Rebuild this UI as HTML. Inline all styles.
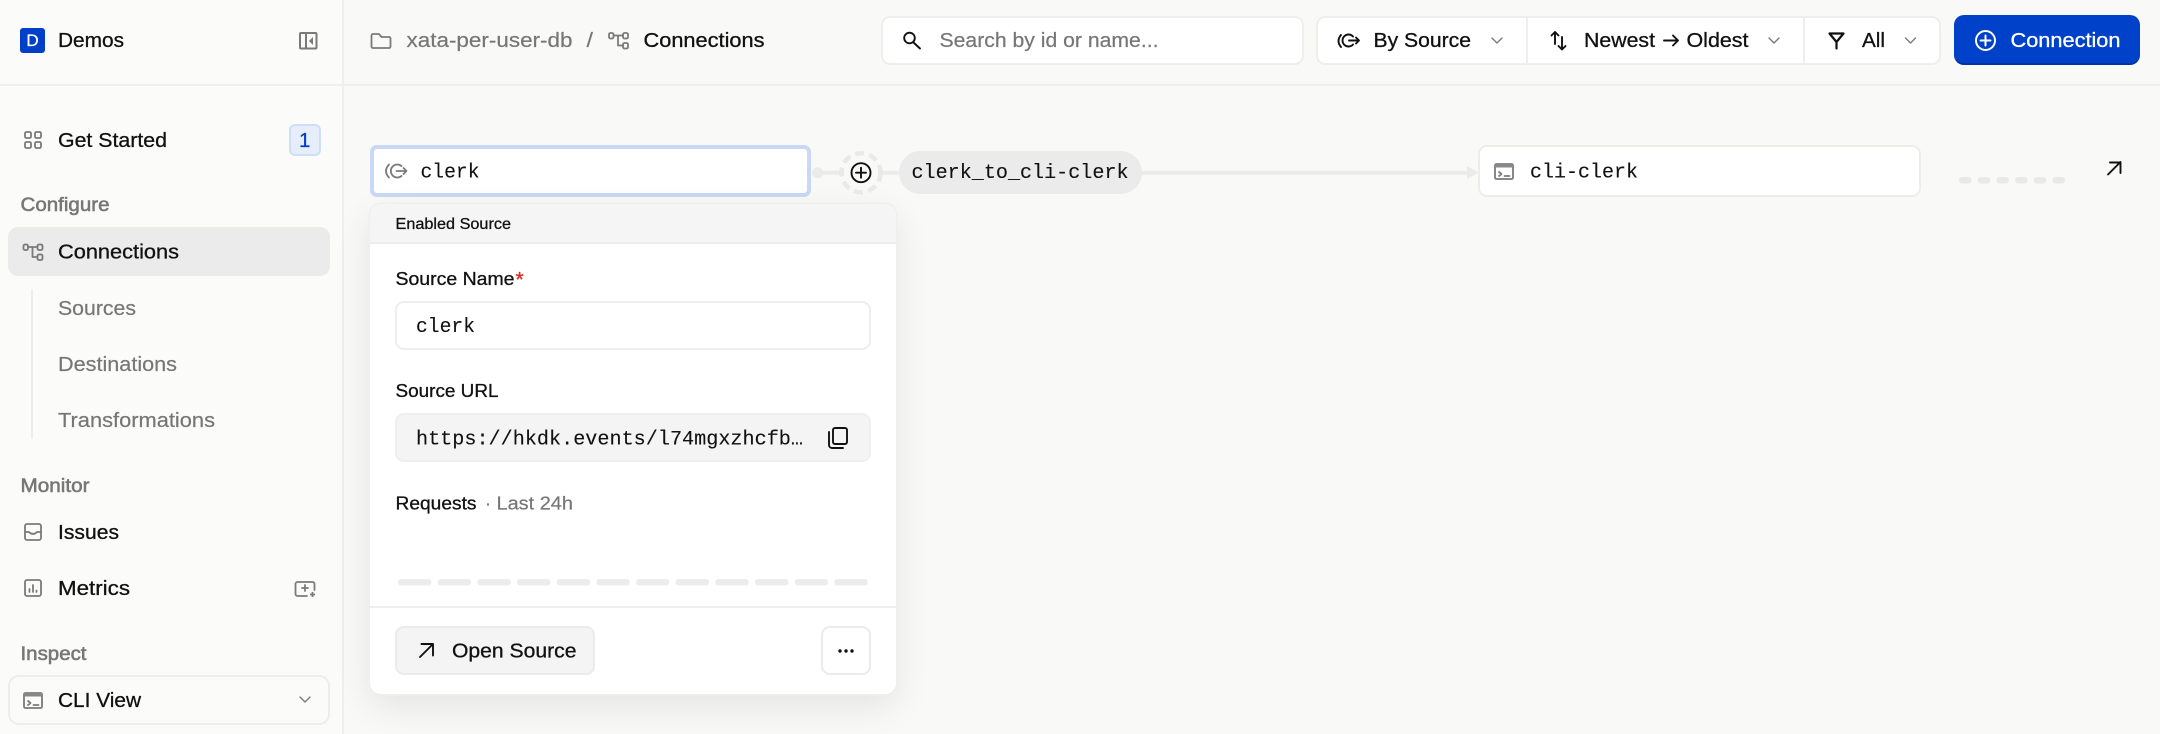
<!DOCTYPE html>
<html lang="en">
<head>
<meta charset="utf-8">
<title>Connections</title>
<style>
html,body{margin:0;padding:0;width:2160px;height:734px;overflow:hidden;background:#f9f9f7}
body{position:relative;font-family:"Liberation Sans",sans-serif}
.b{position:absolute;box-sizing:border-box}
svg.o{position:absolute;left:0;top:0;width:2160px;height:734px}
svg text{font-family:"Liberation Sans",sans-serif;font-size:20.5px;fill:#111;stroke:#111;stroke-width:.3}
svg text.m{font-family:"Liberation Mono",monospace;font-size:20.5px;stroke-width:.12}
svg text.g{fill:#767676;stroke:#767676;stroke-width:.2}
svg text.h{font-size:19px;fill:#777;stroke:#777;stroke-width:.55}
svg text.s{font-size:18.5px;stroke-width:.3}
.i{fill:none;stroke:#7a7a7a;stroke-width:1.8;stroke-linecap:round;stroke-linejoin:round}
.c{fill:none;stroke:#7a7a7a;stroke-width:1.4;stroke-linecap:round;stroke-linejoin:round}
.k{fill:none;stroke:#111;stroke-width:1.9;stroke-linecap:round;stroke-linejoin:round}
</style>
</head>
<body>
<!-- sidebar -->
<div class="b" style="left:0;top:0;width:344px;height:734px;background:#fbfbf9;border-right:2px solid #efefed"></div>
<div class="b" style="left:344px;top:0;width:1816px;height:85px;background:#f9f9f8"></div>
<div class="b" style="left:0;top:84px;width:2160px;height:2px;background:#efefed"></div>
<div class="b" style="left:20px;top:28px;width:25px;height:25px;background:#0040c8;border-radius:3px"></div>
<div class="b" style="left:289px;top:124px;width:32px;height:32px;background:#e6eefb;border:2px solid #cfdef8;border-radius:6px"></div>
<div class="b" style="left:8px;top:227px;width:322px;height:49px;background:#ebebeb;border-radius:10px"></div>
<div class="b" style="left:31px;top:289px;width:2px;height:150px;background:#ededeb"></div>
<div class="b" style="left:8px;top:675px;width:322px;height:50px;background:#fbfbf9;border:2px solid #ededeb;border-radius:11px"></div>

<!-- toolbar -->
<div class="b" style="left:881px;top:16px;width:423px;height:49px;background:#fff;border:2px solid #eeeeec;border-radius:9px"></div>
<div class="b" style="left:1316px;top:16px;width:625px;height:49px;background:#fff;border:2px solid #eeeeec;border-radius:9px"></div>
<div class="b" style="left:1526px;top:17px;width:2px;height:47px;background:#eeeeec"></div>
<div class="b" style="left:1803px;top:17px;width:2px;height:47px;background:#eeeeec"></div>
<div class="b" style="left:1954px;top:15px;width:186px;height:50px;background:#0041c9;border-bottom:2px solid #00349f;border-radius:10px"></div>

<!-- nodes -->
<div class="b" style="left:370px;top:145px;width:441px;height:52px;background:#fff;border:4px solid #c9d8f5;border-radius:7px"></div>
<div class="b" style="left:899px;top:151px;width:243px;height:43px;background:#ebebeb;border-radius:22px"></div>
<div class="b" style="left:1478px;top:145px;width:443px;height:52px;background:#fff;border:2px solid #ededeb;border-radius:9px"></div>

<!-- popover -->
<div class="b" style="left:370px;top:204px;width:526px;height:490px;background:#fff;border-radius:11px;box-shadow:0 0 0 1.5px #efefed,0 12px 36px rgba(0,0,0,.09);overflow:hidden">
  <div class="b" style="left:0;top:0;width:526px;height:40px;background:#f5f5f5;border-bottom:2px solid #eeeeee"></div>
</div>
<div class="b" style="left:395px;top:301px;width:476px;height:49px;background:#fff;border:2px solid #eeeeee;border-radius:9px"></div>
<div class="b" style="left:395px;top:413px;width:476px;height:49px;background:#f4f4f4;border:2px solid #efefef;border-radius:9px"></div>
<div class="b" style="left:370px;top:606px;width:526px;height:1.5px;background:#eeeeee"></div>
<div class="b" style="left:395px;top:626px;width:200px;height:49px;background:#f4f4f4;border:2px solid #ebebeb;border-radius:9px"></div>
<div class="b" style="left:821px;top:626px;width:50px;height:49px;background:#fff;border:2px solid #ebebeb;border-radius:9px"></div>

<svg class="o" viewBox="0 0 2160 734" xmlns="http://www.w3.org/2000/svg">
  <!-- sidebar text -->
  <text x="32.5" y="46" text-anchor="middle" style="font-size:17px;fill:#fff;stroke:#fff;stroke-width:.3">D</text>
  <text x="58" y="47" textLength="66" lengthAdjust="spacingAndGlyphs">Demos</text>
  <text x="58" y="147" textLength="109" lengthAdjust="spacingAndGlyphs">Get Started</text>
  <text x="299" y="147" style="fill:#0040c8;stroke:#0040c8;font-size:20.5px">1</text>
  <text class="h" x="20.5" y="211" textLength="89" lengthAdjust="spacingAndGlyphs">Configure</text>
  <text x="58" y="258.5" textLength="121" lengthAdjust="spacingAndGlyphs">Connections</text>
  <text class="g" x="58" y="315" textLength="78" lengthAdjust="spacingAndGlyphs">Sources</text>
  <text class="g" x="58" y="371" textLength="119" lengthAdjust="spacingAndGlyphs">Destinations</text>
  <text class="g" x="58" y="427" textLength="157" lengthAdjust="spacingAndGlyphs">Transformations</text>
  <text class="h" x="20.5" y="492" textLength="69" lengthAdjust="spacingAndGlyphs">Monitor</text>
  <text x="58" y="539" textLength="61" lengthAdjust="spacingAndGlyphs">Issues</text>
  <text x="58" y="595" textLength="72" lengthAdjust="spacingAndGlyphs">Metrics</text>
  <text class="h" x="20.5" y="660" textLength="66" lengthAdjust="spacingAndGlyphs">Inspect</text>
  <text x="58" y="707" textLength="83" lengthAdjust="spacingAndGlyphs">CLI View</text>

  <!-- sidebar icons -->
  <rect x="300" y="33" width="16.500" height="15.500" rx="1" fill="none" stroke="#7a7a7a" stroke-width="2"/>
  <path d="M306 33v15.500" stroke="#7a7a7a" stroke-width="2"/>
  <path d="M313 37v8l-4-4z" fill="#7a7a7a"/>
  <g class="i">
    <rect x="25" y="132" width="6" height="6" rx="1.5"/><rect x="35" y="132" width="6" height="6" rx="1.5"/>
    <rect x="25" y="142" width="6" height="6" rx="1.5"/><rect x="35" y="142" width="6" height="6" rx="1.5"/>
  </g>
  <g class="i">
    <rect x="23.500" y="244.500" width="4.500" height="5.500" rx="1.500"/><rect x="37.500" y="244.500" width="5" height="5.500" rx="1.500"/><rect x="37.500" y="254.500" width="5" height="5.500" rx="1.500"/>
    <path d="M28 247h9.500M32.500 247v10h5"/>
  </g>
  <g class="i">
    <rect x="25" y="524" width="16" height="16" rx="2"/>
    <path d="M25 532h4q4 4 8 0h4"/>
    <rect x="25" y="580" width="16" height="16" rx="2"/>
    <path d="M29.500 592v-3M33 592v-7M36.500 592v-1.500"/>
    <path d="M307 596h-9.500a2 2 0 0 1-2-2v-10a2 2 0 0 1 2-2h15a2 2 0 0 1 2 2v6"/>
    <path d="M305 585v6M302 588h6"/>
  </g>
  <path d="M312.500 592v5M310 594.500h5" stroke="#7a7a7a" stroke-width="1.800"/>
  <g class="i">
    <rect x="24" y="693" width="18" height="15" rx="1.500"/>
    <path d="M28 701l2.500 2-2.500 2M33.500 705h5"/>
  </g>
  <rect x="24" y="693" width="18" height="3.500" fill="#888"/>
  <path class="c" d="M300 697l5 5 5-5"/>

  <!-- breadcrumb -->
  <path class="i" d="M373 34h6l2.500 3H389a1.500 1.500 0 0 1 1.500 1.500v8a1.500 1.500 0 0 1-1.500 1.500h-16a1.500 1.500 0 0 1-1.500-1.500V35.500A1.500 1.500 0 0 1 373 34z"/>
  <text class="g" x="406.500" y="47" textLength="166" lengthAdjust="spacingAndGlyphs">xata-per-user-db</text>
  <text class="g" x="586.500" y="47" textLength="6.500" lengthAdjust="spacingAndGlyphs">/</text>
  <g class="i">
    <rect x="609" y="33" width="4.500" height="5.500" rx="1.500"/><rect x="623" y="33" width="5" height="5.500" rx="1.500"/><rect x="623" y="43" width="5" height="5.500" rx="1.500"/>
    <path d="M613.500 35.500h9.500M618 35.500v10h5"/>
  </g>
  <text x="643.500" y="47" textLength="121" lengthAdjust="spacingAndGlyphs">Connections</text>

  <!-- toolbar content -->
  <g class="k"><circle cx="909.500" cy="38" r="5.300"/><path d="M913.500 42.500l6.500 6"/></g>
  <text class="g" x="939.500" y="47" textLength="219" lengthAdjust="spacingAndGlyphs">Search by id or name...</text>
  <g class="k">
    <path d="M1341 35q-5 6 0 12M1353 36.500a6 6 0 1 0 0 8M1349 40.500h10M1356 37.500l3 3-3 3"/>
  </g>
  <text x="1373.500" y="47" textLength="97.500" lengthAdjust="spacingAndGlyphs">By Source</text>
  <path class="c" d="M1492 38l5 5 5-5"/>
  <g class="k"><path d="M1555 44V32M1551.500 35.500l3.500-3.500 3.500 3.500M1562 37v12.500M1558.500 46l3.500 3.500 3.500-3.500"/></g>
  <text x="1584" y="47" textLength="71" lengthAdjust="spacingAndGlyphs">Newest</text>
  <path class="k" d="M1664 40.500h14M1673 35.500l5 5-5 5" stroke-width="1.700"/>
  <text x="1686.500" y="47" textLength="62" lengthAdjust="spacingAndGlyphs">Oldest</text>
  <path class="c" d="M1769 38l5 5 5-5"/>
  <path class="k" style="stroke-width:2.200" d="M1829.500 33.500h14l-7 8.500zM1836.500 41.500V48.500"/>
  <text x="1862" y="47" textLength="23" lengthAdjust="spacingAndGlyphs">All</text>
  <path class="c" d="M1905.500 38l5 5 5-5"/>
  <g fill="none" stroke="#fff" stroke-width="2" stroke-linecap="round">
    <circle cx="1985.500" cy="40.500" r="9.500"/><path d="M1985.500 35.500v10M1980.500 40.500h10"/>
  </g>
  <text x="2010.500" y="47" textLength="110" lengthAdjust="spacingAndGlyphs" style="fill:#fff;stroke:#fff">Connection</text>

  <!-- graph: source -->
  <g class="i">
    <path d="M389 164.500q-6 6.500 0 13M401.500 166a6.500 6.500 0 1 0 0 10M396.500 171h10M403.500 168l3 3-3 3"/>
  </g>
  <text class="m" x="420.500" y="177.500" textLength="59" lengthAdjust="spacingAndGlyphs">clerk</text>
  <circle cx="817.500" cy="172.700" r="5.500" fill="#ebebeb"/>
  <path d="M820 172.700h20M882 172.700h17M1141 172.700h327" stroke="#ebebeb" stroke-width="4"/>
  <circle cx="861" cy="172.700" r="19.500" fill="none" stroke="#e9e9e9" stroke-width="4.500" stroke-dasharray="9 5.300"/>
  <g class="k"><circle cx="861" cy="172.700" r="9.500"/><path d="M861 167.700v10M856 172.700h10"/></g>
  <text class="m" x="911.500" y="178" textLength="217" lengthAdjust="spacingAndGlyphs">clerk_to_cli-clerk</text>
  <path d="M1467 166l12 6.500-12 6.500z" fill="#ebebeb"/>

  <!-- graph: destination -->
  <g class="i"><rect x="1495" y="164" width="18" height="15" rx="1.500"/><path d="M1499 172l2.500 2-2.500 2M1504.500 176h5"/></g>
  <rect x="1495" y="164" width="18" height="3.500" fill="#888"/>
  <text class="m" x="1530" y="177.500" textLength="108" lengthAdjust="spacingAndGlyphs">cli-clerk</text>
  <g fill="#e9e9e9">
    <rect x="1959" y="177" width="12.500" height="6.500" rx="3.200"/><rect x="1977.700" y="177" width="12.500" height="6.500" rx="3.200"/><rect x="1996.400" y="177" width="12.500" height="6.500" rx="3.200"/><rect x="2015.100" y="177" width="12.500" height="6.500" rx="3.200"/><rect x="2033.800" y="177" width="12.500" height="6.500" rx="3.200"/><rect x="2052.500" y="177" width="12.500" height="6.500" rx="3.200"/>
  </g>
  <path class="k" d="M2108 174.500l12.500-12.500M2110 162.500h10.500V173"/>

  <!-- popover text -->
  <text x="395.500" y="229" textLength="115.500" lengthAdjust="spacingAndGlyphs" style="font-size:16px;stroke-width:.3">Enabled Source</text>
  <text class="s" x="395.500" y="285" textLength="119" lengthAdjust="spacingAndGlyphs">Source Name</text>
  <text x="515.500" y="286.500" style="font-size:21px;fill:#d92d20;stroke:#d92d20">*</text>
  <text class="m" x="416" y="332" textLength="59" lengthAdjust="spacingAndGlyphs">clerk</text>
  <text class="s" x="395.500" y="397" textLength="103" lengthAdjust="spacingAndGlyphs">Source URL</text>
  <text class="m" x="416" y="444.500" textLength="387" lengthAdjust="spacingAndGlyphs">https://hkdk.events/l74mgxzhcfb…</text>
  <g class="k">
    <rect x="833" y="428" width="14" height="16" rx="2"/>
    <path d="M829 432v13a3 3 0 0 0 3 3h11"/>
  </g>
  <text class="s" x="395.500" y="509.500" textLength="81" lengthAdjust="spacingAndGlyphs">Requests</text>
  <text class="g" x="485" y="509.500" style="font-size:18px">·</text>
  <text class="g" x="496.500" y="509.500" textLength="76.500" lengthAdjust="spacingAndGlyphs" style="font-size:18.5px">Last 24h</text>
  <g fill="#ececec">
    <rect x="398" y="579" width="33.500" height="6.500" rx="3.200"/><rect x="437.700" y="579" width="33.500" height="6.500" rx="3.200"/><rect x="477.400" y="579" width="33.500" height="6.500" rx="3.200"/><rect x="517" y="579" width="33.500" height="6.500" rx="3.200"/><rect x="556.700" y="579" width="33.500" height="6.500" rx="3.200"/><rect x="596.300" y="579" width="33.500" height="6.500" rx="3.200"/><rect x="636" y="579" width="33.500" height="6.500" rx="3.200"/><rect x="675.600" y="579" width="33.500" height="6.500" rx="3.200"/><rect x="715.300" y="579" width="33.500" height="6.500" rx="3.200"/><rect x="754.900" y="579" width="33.500" height="6.500" rx="3.200"/><rect x="794.600" y="579" width="33.500" height="6.500" rx="3.200"/><rect x="834.300" y="579" width="33.500" height="6.500" rx="3.200"/>
  </g>
  <path class="k" d="M420 657l13-13M421.500 644H433v11.500"/>
  <text x="452" y="657.500" textLength="124.500" lengthAdjust="spacingAndGlyphs">Open Source</text>
  <g fill="#111"><circle cx="840" cy="651" r="1.700"/><circle cx="846" cy="651" r="1.700"/><circle cx="852" cy="651" r="1.700"/></g>
</svg>
</body>
</html>
